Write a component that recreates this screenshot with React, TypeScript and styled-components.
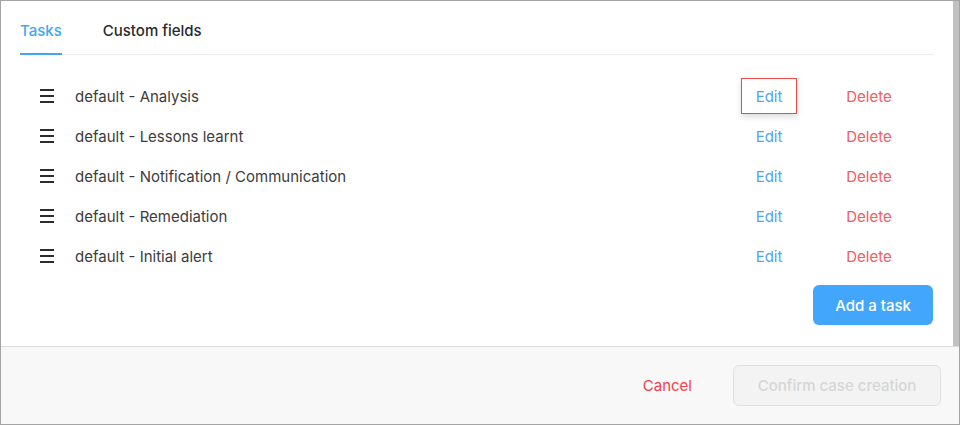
import React from 'react';
import styled, { createGlobalStyle } from 'styled-components';

const tasks = [
  'default - Analysis',
  'default - Lessons learnt',
  'default - Notification / Communication',
  'default - Remediation',
  'default - Initial alert',
];

const GlobalStyle = createGlobalStyle`
  html, body {
    margin: 0;
    padding: 0;
    background: #fff;
  }
  body {
    font-family: Inter, "Open Sans", "Liberation Sans", sans-serif;
    color: #333;
  }
`;

const Frame = styled.div`
  width: 960px;
  height: 425px;
  box-sizing: border-box;
  border: 1px solid #a4a4a4;
  display: flex;
  flex-direction: column;
  background: #fff;
`;

const Scroller = styled.div`
  flex: 1;
  min-height: 0;
  display: flex;
`;

const Body = styled.div`
  flex: 1;
  min-width: 0;
  padding: 0 20px 0 19px;
`;

const ScrollThumb = styled.div`
  width: 6px;
  flex-shrink: 0;
  background: #c1c1c1;
`;

const TabBar = styled.div`
  display: flex;
  gap: 41px;
  border-bottom: 1px solid #ececec;
`;

const Tab = styled.div<{ active?: boolean }>`
  padding: 20px 0 12px;
  line-height: 20px;
  font-size: 15px;
  font-weight: 500;
  color: ${p => (p.active ? '#42a5f5' : '#2a2a2a')};
  border-bottom: 2px solid ${p => (p.active ? '#42a5f5' : 'transparent')};
  margin-bottom: -1px;
`;

const TaskList = styled.div`
  margin-top: 21px;
  display: flex;
  flex-direction: column;
`;

const TaskRow = styled.div`
  display: flex;
  align-items: center;
  height: 40px;
  padding: 0 26px 0 20px;
`;

const Handle = styled.svg`
  width: 14px;
  height: 14px;
  flex-shrink: 0;
  margin-right: 21px;
`;

const TaskName = styled.div`
  flex: 1;
  font-size: 15px;
  color: #3c3c3c;
`;

const Actions = styled.div`
  display: flex;
  align-items: center;
  gap: 34px;
`;

const LinkButton = styled.button<{ tone: 'blue' | 'red'; focused?: boolean }>`
  font-family: inherit;
  font-size: 15px;
  height: 36px;
  width: ${p => (p.tone === 'blue' ? '56px' : '76px')};
  padding: 0;
  background: transparent;
  border: 1px solid ${p => (p.focused ? '#f04848' : 'transparent')};
  box-shadow: ${p => (p.focused ? '0 3px 6px rgba(0, 0, 0, 0.14)' : 'none')};
  color: ${p => (p.tone === 'blue' ? '#4aa6f6' : '#f45c5c')};
  cursor: pointer;
`;

const AddRow = styled.div`
  display: flex;
  justify-content: flex-end;
  margin-top: 9px;
`;

const AddButton = styled.button`
  width: 120px;
  height: 40px;
  border: none;
  border-radius: 6px;
  background: #42a7fc;
  color: #fff;
  font-family: inherit;
  font-size: 15px;
  font-weight: 500;
  cursor: pointer;
`;

const Footer = styled.div`
  height: 77px;
  flex-shrink: 0;
  border-top: 1px solid #dcdcdc;
  background: #f8f8f8;
  display: flex;
  align-items: center;
  justify-content: flex-end;
  gap: 28px;
  padding-right: 18px;
`;

const CancelButton = styled.button`
  background: transparent;
  border: none;
  font-family: inherit;
  font-size: 15px;
  color: #f43f4a;
  padding: 0 13px;
  height: 40px;
  cursor: pointer;
`;

const ConfirmButton = styled.button`
  width: 208px;
  height: 41px;
  border: 1px solid #e0e0e0;
  border-radius: 6px;
  background: #f3f3f3;
  color: #d6d6d6;
  font-family: inherit;
  font-size: 15px;
  font-weight: 500;
`;

const HandleIcon = () => (
  <Handle viewBox="0 0 14 14">
    <rect x="0" y="0" width="14" height="2" fill="#2e2e2e" />
    <rect x="0" y="6" width="14" height="2" fill="#2e2e2e" />
    <rect x="0" y="12" width="14" height="2" fill="#2e2e2e" />
  </Handle>
);

export default function App() {
  return (
    <>
      <GlobalStyle />
      <Frame>
        <Scroller>
          <Body>
            <TabBar>
              <Tab active>Tasks</Tab>
              <Tab>Custom fields</Tab>
            </TabBar>
            <TaskList>
              {tasks.map((name, i) => (
                <TaskRow key={name}>
                  <HandleIcon />
                  <TaskName>{name}</TaskName>
                  <Actions>
                    <LinkButton tone="blue" focused={i === 0}>Edit</LinkButton>
                    <LinkButton tone="red">Delete</LinkButton>
                  </Actions>
                </TaskRow>
              ))}
            </TaskList>
            <AddRow>
              <AddButton>Add a task</AddButton>
            </AddRow>
          </Body>
          <ScrollThumb />
        </Scroller>
        <Footer>
          <CancelButton>Cancel</CancelButton>
          <ConfirmButton disabled>Confirm case creation</ConfirmButton>
        </Footer>
      </Frame>
    </>
  );
}
